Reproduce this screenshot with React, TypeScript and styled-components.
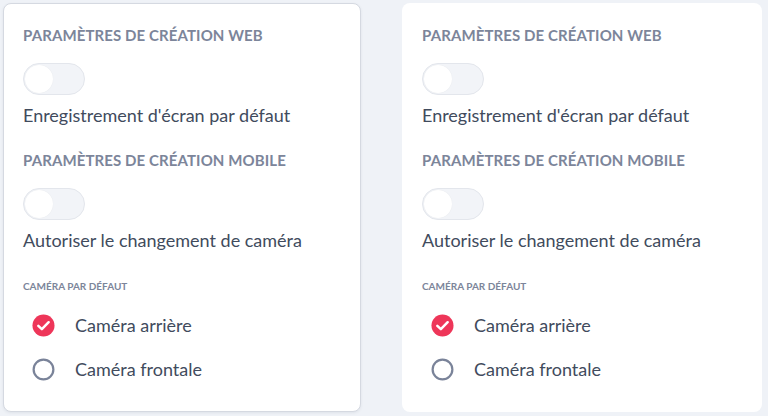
import React from "react";
import styled, { createGlobalStyle } from "styled-components";

const Global = createGlobalStyle`
  html, body { margin: 0; padding: 0; background: #eff2f7; }
  body { font-family: Lato, "Open Sans", sans-serif; }
  * { box-sizing: border-box; }
`;

const Page = styled.div`
  display: grid;
  grid-template-columns: 358px 360px;
  column-gap: 41px;
  padding: 3px 0 0 3px;
  height: 416px;
  align-items: start;
`;

const Card = styled.div<{ $bordered?: boolean }>`
  background: #ffffff;
  border-radius: 8px;
  height: 409px;
  padding: ${(p) => (p.$bordered ? "19px 19px" : "20px 20px")};
  border: ${(p) => (p.$bordered ? "1px solid #d5d9e1" : "none")};
  box-shadow: ${(p) => (p.$bordered ? "0 1px 3px rgba(40,50,80,0.08)" : "none")};
  display: flex;
  flex-direction: column;
`;

const Heading = styled.div<{ $top: number }>`
  margin-top: ${(p) => p.$top}px;
  font-size: 15px;
  font-weight: 700;
  color: #7c859a;
  text-transform: uppercase;
  letter-spacing: 0.1px;
  line-height: 18px;
`;

const Toggle = styled.div`
  margin-top: 19px;
  width: 62px;
  height: 32px;
  border-radius: 16px;
  background: #f2f4f8;
  border: 1px solid #e3e6ec;
  padding: 1px;
  display: flex;
  align-items: center;
`;

const Knob = styled.div`
  width: 28px;
  height: 28px;
  border-radius: 50%;
  background: #ffffff;
  box-shadow: 0 0 1px rgba(0, 0, 0, 0.08);
`;

const Label = styled.div`
  margin-top: 9px;
  font-size: 18px;
  color: #414b5d;
  line-height: 22px;
`;

const SubHeading = styled.div`
  margin-top: 30px;
  font-size: 10px;
  font-weight: 700;
  color: #7c859a;
  text-transform: uppercase;
  line-height: 11px;
`;

const RadioList = styled.div`
  margin-top: 22px;
  display: flex;
  flex-direction: column;
  gap: 22px;
  padding-left: 9px;
`;

const RadioRow = styled.div`
  display: flex;
  align-items: center;
  gap: 20px;
  height: 22px;
  font-size: 18px;
  color: #414b5d;
`;

const Checked = () => (
  <svg width="23" height="23" viewBox="0 0 24 24">
    <circle cx="12" cy="12" r="11.5" fill="#ee3659" />
    <path d="M6.6 12.3 L10.3 15.8 L17.4 8.6" fill="none" stroke="#fff" strokeWidth="2.6" strokeLinecap="round" strokeLinejoin="round" />
  </svg>
);

const Unchecked = () => (
  <svg width="23" height="23" viewBox="0 0 24 24">
    <circle cx="12" cy="12" r="10.3" fill="none" stroke="#7a8399" strokeWidth="2.3" />
  </svg>
);

const Panel = ({ bordered }: { bordered?: boolean }) => (
  <Card $bordered={bordered}>
    <Heading $top={3}>Paramètres de création web</Heading>
    <Toggle>
      <Knob />
    </Toggle>
    <Label>Enregistrement d'écran par défaut</Label>
    <Heading $top={25}>Paramètres de création mobile</Heading>
    <Toggle>
      <Knob />
    </Toggle>
    <Label>Autoriser le changement de caméra</Label>
    <SubHeading>Caméra par défaut</SubHeading>
    <RadioList>
      <RadioRow>
        <Checked />
        Caméra arrière
      </RadioRow>
      <RadioRow>
        <Unchecked />
        Caméra frontale
      </RadioRow>
    </RadioList>
  </Card>
);

export default function App() {
  return (
    <>
      <Global />
      <Page>
        <Panel bordered />
        <Panel />
      </Page>
    </>
  );
}
